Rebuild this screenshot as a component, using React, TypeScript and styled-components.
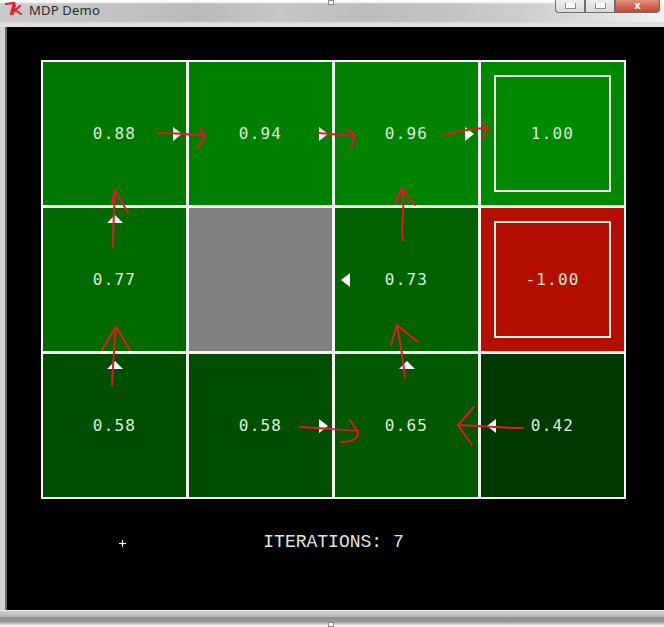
import React from "react";
import styled, { createGlobalStyle, css } from "styled-components";

type Dir = "up" | "down" | "left" | "right";
type CellData =
  | { kind: "value"; value: number; dir: Dir }
  | { kind: "terminal"; value: number }
  | { kind: "wall" };

const ROWS: CellData[][] = [
  [
    { kind: "value", value: 0.88, dir: "right" },
    { kind: "value", value: 0.94, dir: "right" },
    { kind: "value", value: 0.96, dir: "right" },
    { kind: "terminal", value: 1.0 },
  ],
  [
    { kind: "value", value: 0.77, dir: "up" },
    { kind: "wall" },
    { kind: "value", value: 0.73, dir: "left" },
    { kind: "terminal", value: -1.0 },
  ],
  [
    { kind: "value", value: 0.58, dir: "up" },
    { kind: "value", value: 0.58, dir: "right" },
    { kind: "value", value: 0.65, dir: "up" },
    { kind: "value", value: 0.42, dir: "left" },
  ],
];

const colorFor = (cell: CellData): string => {
  if (cell.kind === "wall") return "#808080";
  if (cell.value < 0) return `rgb(${Math.round(-cell.value * 180)}, 14, 0)`;
  return `rgb(0, ${Math.round(cell.value * 136)}, 0)`;
};

const Global = createGlobalStyle`
  html, body { margin: 0; padding: 0; background: #ffffff; }
  body { font-family: "DejaVu Sans", sans-serif; }
  #root { width: 664px; height: 627px; overflow: hidden; }
`;

const Window = styled.div`
  position: relative;
  width: 664px;
  height: 627px;
  display: flex;
  flex-direction: column;
  overflow: hidden;
  background: #d6d6d6;
`;

const TitleBar = styled.header`
  flex: none;
  height: 22px;
  display: flex;
  align-items: flex-start;
  background:
    linear-gradient(180deg, rgba(255,255,255,0.95) 0px, rgba(255,255,255,0.95) 2px, rgba(255,255,255,0) 4px),
    linear-gradient(90deg, #cbcbcb 0%, #c2c2c2 18%, #b9b9b9 30%, #c6c6c6 42%, #bcbcbc 55%, #c3c3c3 68%, #cfcfcf 80%, #e2e2e2 92%, #f2f2f2 100%);
`;

const Logo = styled.svg`
  flex: none;
  width: 18px;
  height: 13px;
  margin: 2px 0 0 5px;
`;

const Title = styled.span`
  margin: 2px 0 0 6px;
  font-family: "Noto Sans", "DejaVu Sans", sans-serif;
  font-size: 13px;
  line-height: 16px;
  color: #262a33;
  letter-spacing: 0.2px;
`;

const Caption = styled.div`
  margin-left: auto;
  margin-right: 4px;
  display: flex;
`;

const CapButton = styled.div<{ $close?: boolean; $w: number }>`
  width: ${(p) => p.$w}px;
  height: 13px;
  box-sizing: border-box;
  border: 1px solid #6e6e6e;
  border-top: none;
  display: flex;
  justify-content: center;
  align-items: flex-end;
  overflow: hidden;
  ${(p) =>
    p.$close
      ? css`
          background: linear-gradient(180deg, #e3917f 0%, #d2604a 60%, #c6492f 100%);
          border-radius: 0 0 4px 0;
        `
      : css`
          background: linear-gradient(180deg, #eeeeee 0%, #d9d9d9 100%);
          &:first-child { border-radius: 0 0 0 4px; }
        `}
`;

const CapGlyph = styled.span`
  width: 9px;
  height: 5px;
  margin-bottom: 3px;
  background: #ffffff;
  border: 1px solid #8a8a8a;
  border-top: none;
`;

const CloseGlyph = styled.span`
  font-family: "DejaVu Sans", sans-serif;
  font-weight: bold;
  font-size: 10px;
  line-height: 11px;
  margin-bottom: 1px;
  color: #ffffff;
`;

const TopFrame = styled.div`
  flex: none;
  height: 5px;
  background: linear-gradient(180deg, #d9d9d9, #e2e2e2);
`;

const Body = styled.div`
  flex: none;
  height: 583px;
  display: flex;
`;

const LeftFrame = styled.div`
  flex: none;
  width: 5px;
  background: #d2d2d2;
  border-right: 2px solid #6a6a6a;
`;

const Canvas = styled.main`
  flex: 1;
  background: #000000;
  padding: 33px 0 0 34px;
  box-sizing: border-box;
  display: flex;
  flex-direction: column;
`;

const Board = styled.div`
  position: relative;
  width: 585px;
  height: 439px;
`;

const Grid = styled.div`
  box-sizing: border-box;
  width: 585px;
  height: 439px;
  display: grid;
  grid-template-columns: repeat(4, 143px);
  grid-template-rows: repeat(3, 143px);
  gap: 3px;
  padding: 2px;
  background: #f4f4f4;
`;

const Cell = styled.div<{ $bg: string }>`
  position: relative;
  background: ${(p) => p.$bg};
  display: flex;
  align-items: center;
  justify-content: center;
`;

const Terminal = styled.div`
  box-sizing: border-box;
  width: 117px;
  height: 117px;
  border: 2px solid #eef2ea;
  display: flex;
  align-items: center;
  justify-content: center;
`;

const Value = styled.span`
  font-family: "DejaVu Sans Mono", monospace;
  font-size: 16px;
  letter-spacing: 1.2px;
  color: #dcefd8;
  line-height: 16px;
`;

const Pointer = styled.span<{ $dir: Dir }>`
  position: absolute;
  width: 0;
  height: 0;
  ${({ $dir }) => {
    switch ($dir) {
      case "right":
        return css`
          right: 4px;
          top: 50%;
          margin-top: -7px;
          border-left: 9px solid #ffffff;
          border-top: 7px solid transparent;
          border-bottom: 7px solid transparent;
        `;
      case "left":
        return css`
          left: 6px;
          top: 50%;
          margin-top: -7px;
          border-right: 9px solid #ffffff;
          border-top: 7px solid transparent;
          border-bottom: 7px solid transparent;
        `;
      case "up":
        return css`
          top: 7px;
          left: 50%;
          margin-left: -8px;
          border-bottom: 8px solid #ffffff;
          border-left: 8px solid transparent;
          border-right: 8px solid transparent;
        `;
      default:
        return css`
          bottom: 7px;
          left: 50%;
          margin-left: -8px;
          border-top: 8px solid #ffffff;
          border-left: 8px solid transparent;
          border-right: 8px solid transparent;
        `;
    }
  }}
`;

const Annotations = styled.svg`
  position: absolute;
  left: 0;
  top: 0;
  width: 585px;
  height: 439px;
  overflow: visible;
  pointer-events: none;
  fill: none;
  stroke: #e8142c;
  stroke-width: 2;
  stroke-linecap: round;
  stroke-linejoin: round;
`;

const Footer = styled.div`
  width: 585px;
  margin-top: 33px;
  display: grid;
  grid-template-columns: 1fr auto 1fr;
  align-items: center;
`;

const Sparkle = styled.svg`
  width: 7px;
  height: 7px;
  margin: 2px 0 0 78px;
`;

const Iterations = styled.span`
  font-family: "Liberation Mono", "Courier New", monospace;
  font-size: 18px;
  line-height: 20px;
  color: #e2e2e2;
  white-space: pre;
`;

const BottomFrame = styled.div`
  flex: none;
  height: 7px;
  box-sizing: border-box;
  border-top: 1px solid #e8e8e8;
  background: linear-gradient(180deg, #cfcfcf, #b4b4b4);
`;

const Taskbar = styled.div`
  flex: none;
  height: 10px;
  background: linear-gradient(180deg, #8c8c8c 0%, #9a9a9a 50%, #e6e6e6 80%, #f6f6f6 100%);
`;

const Handle = styled.span<{ $top: boolean }>`
  position: absolute;
  left: 328px;
  ${(p) => (p.$top ? "top: 0;" : "bottom: 0;")}
  width: 6px;
  height: 5px;
  box-sizing: border-box;
  background: #ffffff;
  border: 1px solid #8a8a8a;
`;

const ARROWS: string[] = [
  "M117 73 C135 73 150 75 164 75",
  "M159 68 L164 75 L157 89",
  "M277 73 C290 74 302 75 314 76",
  "M305 69 L314 75 L310 89",
  "M403 75 C418 71 432 68 447 68",
  "M441 62 L447 68 L442 79",
  "M72 187 C72 168 73 150 74 130",
  "M71 143 L74 130 L87 153",
  "M71 325 C72 306 73 287 75 267",
  "M61 290 L75 267 L89 290",
  "M362 180 C359 165 365 150 361 128",
  "M354 143 L361 128 L374 145",
  "M364 318 C362 300 360 285 356 265",
  "M350 285 L356 265 L377 282",
  "M259 367 C280 368 300 370 317 371",
  "M309 360 L317 372 C317 379 310 382 300 382",
  "M482 368 C460 368 440 366 417 365",
  "M433 347 L417 365 L431 385",
];

const format = (v: number) => v.toFixed(2);

export default function App() {
  return (
    <>
      <Global />
      <Window>
        <Handle $top />
        <TitleBar>
          <Logo viewBox="0 0 18 13">
            <path d="M1 2 L9 1 L6 12" stroke="#e0202a" strokeWidth="2.2" fill="none" strokeLinecap="round" />
            <path d="M10 3 L8 12 M9 9 L15 4 M10 8 L16 12" stroke="#e0202a" strokeWidth="2" fill="none" strokeLinecap="round" />
          </Logo>
          <Title>MDP Demo</Title>
          <Caption>
            <CapButton $w={30}>
              <CapGlyph />
            </CapButton>
            <CapButton $w={30}>
              <CapGlyph />
            </CapButton>
            <CapButton $w={45} $close>
              <CloseGlyph>x</CloseGlyph>
            </CapButton>
          </Caption>
        </TitleBar>
        <TopFrame />
        <Body>
          <LeftFrame />
          <Canvas>
            <Board>
              <Grid>
                {ROWS.flatMap((row, r) =>
                  row.map((cell, c) => (
                    <Cell key={`${r}-${c}`} $bg={colorFor(cell)}>
                      {cell.kind === "value" && (
                        <>
                          <Value>{format(cell.value)}</Value>
                          <Pointer $dir={cell.dir} />
                        </>
                      )}
                      {cell.kind === "terminal" && (
                        <Terminal>
                          <Value>{format(cell.value)}</Value>
                        </Terminal>
                      )}
                    </Cell>
                  ))
                )}
              </Grid>
              <Annotations viewBox="0 0 585 439">
                {ARROWS.map((d, i) => (
                  <path key={i} d={d} />
                ))}
              </Annotations>
            </Board>
            <Footer>
              <Sparkle viewBox="0 0 7 7">
                <path d="M3.5 0 L3.5 7 M0 3.5 L7 3.5" stroke="#ffffff" strokeWidth="1" />
                <circle cx="3.5" cy="3.5" r="1.2" fill="#ffffff" />
              </Sparkle>
              <Iterations>ITERATIONS: 7</Iterations>
              <span />
            </Footer>
          </Canvas>
        </Body>
        <BottomFrame />
        <Taskbar />
        <Handle $top={false} />
      </Window>
    </>
  );
}
